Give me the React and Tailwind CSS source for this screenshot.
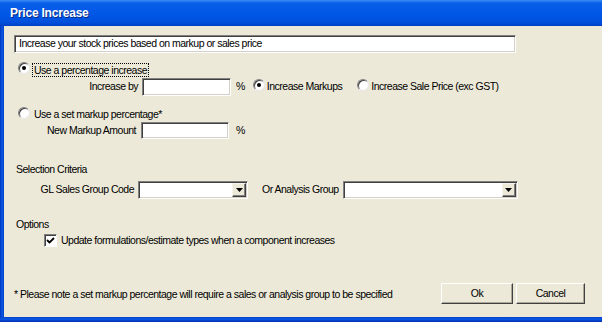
import React from "react";

const font = { fontFamily: '"Liberation Sans", Arial, sans-serif' };

function Radio({ checked }) {
  return (
    <span className="relative inline-block h-[12px] w-[12px] shrink-0 rounded-full border border-t-[#808080] border-l-[#808080] border-r-[#e8e8e8] border-b-[#e8e8e8] bg-white shadow-[inset_1px_1px_0_#404040]">
      {checked && (
        <span className="absolute left-[3px] top-[3px] h-[4px] w-[4px] rounded-full bg-black" />
      )}
    </span>
  );
}

function Sunken({ className = "" }) {
  return (
    <div
      className={
        "border border-t-[#808080] border-l-[#808080] border-r-white border-b-white bg-white shadow-[inset_1px_1px_0_#404040,inset_-1px_-1px_0_#d4d0c8] " +
        className
      }
    />
  );
}

function Combo({ className = "" }) {
  return (
    <div
      className={
        "flex justify-end border border-t-[#808080] border-l-[#808080] border-r-white border-b-white bg-white p-[1px] shadow-[inset_1px_1px_0_#404040,inset_-1px_-1px_0_#d4d0c8] " +
        className
      }
    >
      <div className="flex w-[14px] items-center justify-center border border-t-[#f4f3ee] border-l-[#f4f3ee] border-r-[#404040] border-b-[#404040] bg-[#ece9d8] shadow-[inset_-1px_-1px_0_#808080]">
        <svg width="7" height="4" viewBox="0 0 7 4">
          <path d="M0 0H7L3.5 4Z" fill="#000" />
        </svg>
      </div>
    </div>
  );
}

function Button({ children, className = "" }) {
  return (
    <div
      className={
        "flex h-[21px] items-center justify-center border border-t-white border-l-white border-r-[#404040] border-b-[#404040] bg-[#ece9d8] shadow-[inset_-1px_-1px_0_#aca899] " +
        className
      }
    >
      {children}
    </div>
  );
}

export default function App() {
  return (
    <div
      className="flex h-[322px] w-[602px] flex-col bg-[#ece9d8] text-[10.5px] tracking-[-0.5px] text-black"
      style={font}
    >
      {/* Title bar */}
      <div className="flex h-[26px] shrink-0 items-center bg-[linear-gradient(180deg,#3d8df5_0px,#0a5fe8_3px,#0057e6_14px,#0050dd_22px,#0040c4_26px)] pl-[10px]">
        <span className="text-[12px] font-bold tracking-[-0.2px] text-white [text-shadow:1px_1px_0_#0a2a88]">
          Price Increase
        </span>
      </div>

      <div className="flex min-h-0 flex-1">
        <div className="w-[4px] shrink-0 bg-[linear-gradient(90deg,#0030b8,#0a5ae6_2px,#0040c8)]" />
        <div className="flex flex-1 flex-col pl-[10px]">
          {/* description */}
          <div className="mt-[9px] flex h-[18px] w-[502px] items-center border border-t-[#808080] border-l-[#808080] border-r-white border-b-white bg-white pl-[4px] shadow-[inset_1px_1px_0_#404040,inset_-1px_-1px_0_#d4d0c8]">
            Increase your stock prices based on markup or sales price
          </div>

          {/* radio 1 */}
          <div className="mt-[10px] flex h-[14px] items-center">
            <span className="ml-[4px]">
              <Radio checked />
            </span>
            <span className="ml-[2px] border border-dotted border-black px-[1px] leading-[12px]">
              Use a percentage increase
            </span>
          </div>

          {/* Increase by */}
          <div className="mt-[1px] flex h-[18px] items-center">
            <span className="w-[124px] text-right">Increase by</span>
            <Sunken className="ml-[4px] h-[18px] w-[89px]" />
            <span className="ml-[5px]">%</span>
            <span className="ml-[8px]">
              <Radio checked />
            </span>
            <span className="ml-[1px] pl-[1px]">Increase Markups</span>
            <span className="ml-[15px]">
              <Radio />
            </span>
            <span className="ml-[1px] pl-[1px]">Increase Sale Price (exc GST)</span>
          </div>

          {/* radio 2 */}
          <div className="mt-[12px] flex h-[14px] items-center">
            <span className="ml-[4px]">
              <Radio />
            </span>
            <span className="ml-[3px] px-[1px]">Use a set markup percentage*</span>
          </div>

          {/* New Markup */}
          <div className="flex h-[17px] items-center">
            <span className="w-[122px] text-right">New Markup Amount</span>
            <Sunken className="ml-[5px] h-[17px] w-[88px]" />
            <span className="ml-[7px]">%</span>
          </div>

          {/* Selection criteria */}
          <div className="mt-[24px] flex h-[13px] items-center pl-[2px]">Selection Criteria</div>

          <div className="mt-[5px] flex h-[18px] items-center">
            <span className="w-[120px] text-right">GL Sales Group Code</span>
            <Combo className="ml-[4px] h-[18px] w-[110px]" />
            <span className="ml-[14px]">Or Analysis Group</span>
            <Combo className="ml-[4px] h-[18px] w-[175px]" />
          </div>

          {/* Options */}
          <div className="mt-[19px] flex h-[13px] items-center pl-[2px]">Options</div>

          <div className="mt-[3px] flex h-[13px] items-center">
            <span className="relative ml-[30px] flex h-[13px] w-[13px] items-center justify-center border border-t-[#808080] border-l-[#808080] border-r-white border-b-white bg-white shadow-[inset_1px_1px_0_#404040]">
              <svg width="9" height="9" viewBox="0 0 9 9">
                <path d="M1 4 L3.5 6.5 L8 2" stroke="#000" strokeWidth="1.8" fill="none" />
              </svg>
            </span>
            <span className="ml-[4px]">Update formulations/estimate types when a component increases</span>
          </div>

          {/* Footer */}
          <div className="mt-[36px] flex h-[21px] items-center">
            <span className="mt-[3px] w-[427px]">* Please note a set markup percentage will require a sales or analysis group to be specified</span>
            <Button className="w-[72px]">Ok</Button>
            <Button className="ml-[3px] w-[69px]">Cancel</Button>
          </div>
        </div>
      </div>
      <div className="h-[5px] shrink-0 bg-[linear-gradient(180deg,#0040c8,#0a5ae6_2px,#0030b0)]" />
    </div>
  );
}
